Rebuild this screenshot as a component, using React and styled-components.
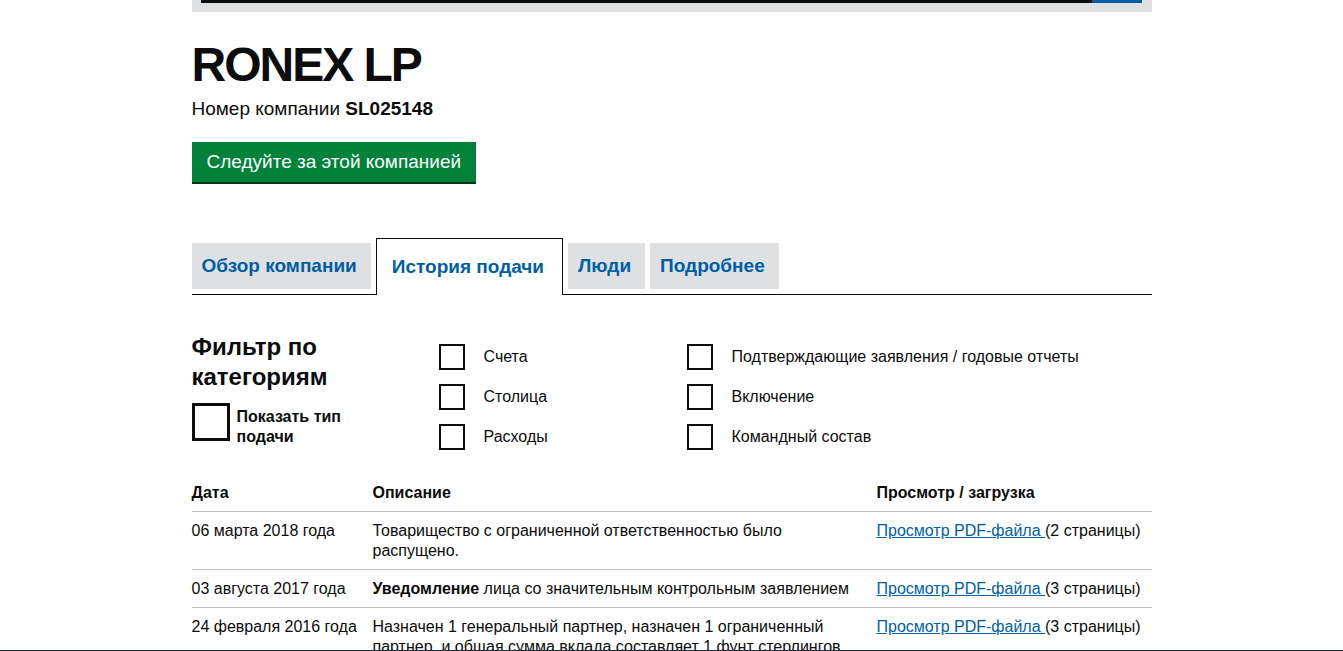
import React from 'react';
import styled, { createGlobalStyle } from 'styled-components';

const GlobalStyle = createGlobalStyle`
  html, body {
    margin: 0;
    padding: 0;
    background: #ffffff;
    color: #0b0c0c;
    font-family: "Liberation Sans", Arial, sans-serif;
  }
`;

const Page = styled.div`
  width: 960px;
  margin: 0 auto;
`;

const SearchBar = styled.div`
  display: flex;
  background: #dee0e2;
  padding: 0 10px 9px 9px;
`;

const SearchInput = styled.div`
  flex: 1;
  height: 3px;
  background: #0b0c0c;
`;

const SearchButton = styled.div`
  width: 50px;
  height: 3px;
  background: #005ea5;
`;

const Header = styled.header`
  padding-top: 25px;
`;

const Title = styled.h1`
  margin: 0;
  font-size: 48px;
  line-height: 56px;
  font-weight: 700;
  letter-spacing: -2px;
`;

const CompanyNumber = styled.p`
  margin: 4px 0 0;
  font-size: 19px;
  line-height: 24px;

  strong {
    font-weight: 700;
  }
`;

const FollowButton = styled.button`
  margin-top: 21px;
  height: 40px;
  padding: 0 15px;
  border: 0;
  background: #00823b;
  box-shadow: 0 2px 0 #003618;
  color: #ffffff;
  font-family: "Liberation Sans", Arial, sans-serif;
  font-size: 19px;
  line-height: 38px;
  cursor: pointer;
`;

const Tabs = styled.nav`
  display: flex;
  align-items: flex-end;
  gap: 5px;
  margin-top: 56px;
  border-bottom: 1px solid #0b0c0c;
`;

const Tab = styled.a`
  display: block;
  box-sizing: border-box;
  height: ${p => (p.$active ? '57px' : '46px')};
  margin-bottom: ${p => (p.$active ? '-1px' : '5px')};
  line-height: ${p => (p.$active ? '56px' : '46px')};
  background: ${p => (p.$active ? '#ffffff' : '#dee0e2')};
  border: ${p => (p.$active ? '1px solid #0b0c0c' : '0')};
  border-bottom: 0;
  padding: ${p => (p.$active ? '0 18px 0 15px' : '0 14px 0 10px')};
  color: #005ea5;
  font-size: 19px;
  font-weight: 700;
  text-decoration: none;
`;

const Filters = styled.section`
  display: grid;
  grid-template-columns: 247px 248px 1fr;
  margin-top: 37px;
`;

const FilterTitle = styled.h2`
  margin: 0;
  font-size: 24px;
  line-height: 30px;
  font-weight: 700;
`;

const ShowType = styled.label`
  display: flex;
  gap: 7px;
  margin-top: 11px;
  font-size: 16px;
  line-height: 20px;
  font-weight: 700;

  span {
    padding-top: 4px;
  }
`;

const BigBox = styled.span`
  flex: none;
  box-sizing: border-box;
  width: 38px;
  height: 38px;
  border: 3px solid #0b0c0c;
`;

const CheckList = styled.div`
  display: flex;
  flex-direction: column;
  gap: 14px;
  padding-top: 12px;
`;

const CheckRow = styled.label`
  display: flex;
  align-items: center;
  gap: 19px;
  font-size: 16px;
  line-height: 26px;
  color: #0b0c0c;
`;

const Box = styled.span`
  flex: none;
  box-sizing: border-box;
  width: 26px;
  height: 26px;
  border: 2px solid #0b0c0c;
`;

const Table = styled.table`
  width: 100%;
  margin-top: 24px;
  border-collapse: collapse;
  font-size: 16px;
  line-height: 20px;

  th {
    text-align: left;
    font-weight: 700;
    padding: 9px 15px 8px 0;
    border-bottom: 1px solid #bfc1c3;
  }

  td {
    vertical-align: top;
    padding: 9px 15px 8px 0;
    border-bottom: 1px solid #bfc1c3;
  }

  th:last-child,
  td:last-child {
    padding-right: 0;
  }
`;

const Link = styled.a`
  color: #005ea5;
  text-decoration: underline;
`;

const BottomEdge = styled.div`
  position: fixed;
  left: 0;
  right: 0;
  bottom: 0;
  height: 1px;
  background: #1d2a40;
`;

const checksA = ['Счета', 'Столица', 'Расходы'];
const checksB = ['Подтверждающие заявления / годовые отчеты', 'Включение', 'Командный состав'];

const rows = [
  {
    date: '06 марта 2018 года',
    desc: <>Товарищество с ограниченной ответственностью было распущено.</>,
    pages: 2,
  },
  {
    date: '03 августа 2017 года',
    desc: <><b>Уведомление</b> лица со значительным контрольным заявлением</>,
    pages: 3,
  },
  {
    date: '24 февраля 2016 года',
    desc: <>Назначен 1 генеральный партнер, назначен 1 ограниченный партнер, и общая сумма вклада составляет 1 фунт стерлингов.</>,
    pages: 3,
  },
];

const App = () => {
  return (
    <>
      <GlobalStyle />
      <Page>
        <SearchBar>
          <SearchInput />
          <SearchButton />
        </SearchBar>

        <Header>
          <Title>RONEX LP</Title>
          <CompanyNumber>Номер компании <strong>SL025148</strong></CompanyNumber>
          <FollowButton>Следуйте за этой компанией</FollowButton>
        </Header>

        <Tabs>
          <Tab href="#">Обзор компании</Tab>
          <Tab href="#" $active>История подачи</Tab>
          <Tab href="#">Люди</Tab>
          <Tab href="#">Подробнее</Tab>
        </Tabs>

        <Filters>
          <div>
            <FilterTitle>Фильтр по<br />категориям</FilterTitle>
            <ShowType>
              <BigBox />
              <span>Показать тип<br />подачи</span>
            </ShowType>
          </div>
          <CheckList>
            {checksA.map(c => (
              <CheckRow key={c}><Box />{c}</CheckRow>
            ))}
          </CheckList>
          <CheckList>
            {checksB.map(c => (
              <CheckRow key={c}><Box />{c}</CheckRow>
            ))}
          </CheckList>
        </Filters>

        <Table>
          <colgroup>
            <col style={{ width: '181px' }} />
            <col style={{ width: '504px' }} />
            <col />
          </colgroup>
          <thead>
            <tr>
              <th>Дата</th>
              <th>Описание</th>
              <th>Просмотр / загрузка</th>
            </tr>
          </thead>
          <tbody>
            {rows.map(r => (
              <tr key={r.date}>
                <td>{r.date}</td>
                <td>{r.desc}</td>
                <td><Link href="#">Просмотр PDF-файла </Link>({r.pages} страницы)</td>
              </tr>
            ))}
          </tbody>
        </Table>
      </Page>
      <BottomEdge />
    </>
  );
};

export default App;
